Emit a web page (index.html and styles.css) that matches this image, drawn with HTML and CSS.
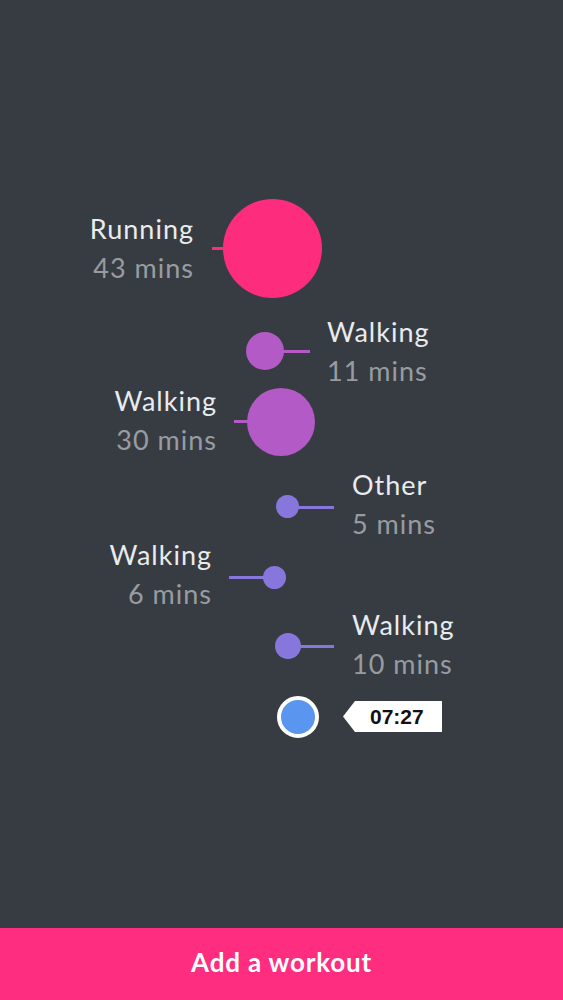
FILE: index.html
```html
<!DOCTYPE html>
<html>
<head>
<meta charset="utf-8">
<link rel="stylesheet" href="styles.css">
</head>
<body>
<div class="app">
  <div class="timeline">
    <div class="stem" style="left:212px;top:247px;width:12px"></div>
    <div class="dot pink" style="left:223px;top:199px;width:99px;height:99px"></div>
    <div class="label right" style="right:370px;top:209px"><div class="t">Running</div><div class="s">43 mins</div></div>

    <div class="stem purple" style="left:280px;top:350px;width:30px"></div>
    <div class="dot purple" style="left:246px;top:332px;width:38px;height:38px"></div>
    <div class="label left" style="left:327px;top:312px"><div class="t">Walking</div><div class="s">11 mins</div></div>

    <div class="stem purple" style="left:234px;top:420px;width:16px"></div>
    <div class="dot purple" style="left:247px;top:388px;width:68px;height:68px"></div>
    <div class="label right" style="right:347px;top:381px"><div class="t">Walking</div><div class="s">30 mins</div></div>

    <div class="stem lav" style="left:290px;top:506px;width:44px"></div>
    <div class="dot lav" style="left:276px;top:495px;width:23px;height:23px"></div>
    <div class="label left" style="left:352px;top:465px"><div class="t">Other</div><div class="s">5 mins</div></div>

    <div class="stem lav" style="left:229px;top:576px;width:44px"></div>
    <div class="dot lav" style="left:263px;top:566px;width:23px;height:23px"></div>
    <div class="label right" style="right:352px;top:535px"><div class="t">Walking</div><div class="s">6 mins</div></div>

    <div class="stem lav" style="left:290px;top:645px;width:44px"></div>
    <div class="dot lav" style="left:275px;top:633px;width:26px;height:26px"></div>
    <div class="label left" style="left:352px;top:605px"><div class="t">Walking</div><div class="s">10 mins</div></div>

    <div class="now" style="left:277px;top:696px"></div>
    <div class="tag" style="left:343px;top:701px">07:27</div>
  </div>
  <div class="cta">Add a workout</div>
</div>
</body>
</html>
```
FILE: styles.css
```css
html, body {
  margin: 0;
  padding: 0;
  background: #373c43;
}
.app {
  width: 563px;
  height: 1000px;
  display: flex;
  flex-direction: column;
  font-family: Lato, "Open Sans", sans-serif;
}
.timeline {
  position: relative;
  flex: 1;
}
.dot {
  position: absolute;
  border-radius: 50%;
}
.pink { background: #fe2c7c; }
.purple { background: #b35ac7; }
.lav { background: #8777dd; }
.stem {
  position: absolute;
  height: 3px;
  background: #fe2c7c;
}
.stem.purple { background: #b35ac7; }
.stem.lav { background: #8777dd; }
.label {
  position: absolute;
  line-height: 39px;
  font-size: 27px;
  letter-spacing: 1px;
  white-space: nowrap;
}
.label.right { text-align: right; margin-right: -1px; }
.label.left { text-align: left; }
.t { color: #e9ebed; }
.s { color: #989ca2; }
.now {
  position: absolute;
  width: 34px;
  height: 34px;
  border-radius: 50%;
  background: #5a95ef;
  border: 4px solid #ffffff;
}
.tag {
  position: absolute;
  width: 99px;
  height: 31px;
  background: #ffffff;
  color: #111;
  font-family: "Liberation Sans", Arial, sans-serif;
  font-weight: bold;
  font-size: 21px;
  line-height: 31px;
  box-sizing: border-box;
  padding-left: 27px;
  clip-path: polygon(12px 0, 100% 0, 100% 100%, 12px 100%, 0 50%);
}
.cta {
  height: 72px;
  flex: none;
  background: #ff2d80;
  color: #ffffff;
  display: flex;
  align-items: center;
  justify-content: center;
  font-size: 26px;
  font-weight: bold;
  letter-spacing: 0.8px;
  padding-bottom: 4px;
  box-sizing: border-box;
}
```
